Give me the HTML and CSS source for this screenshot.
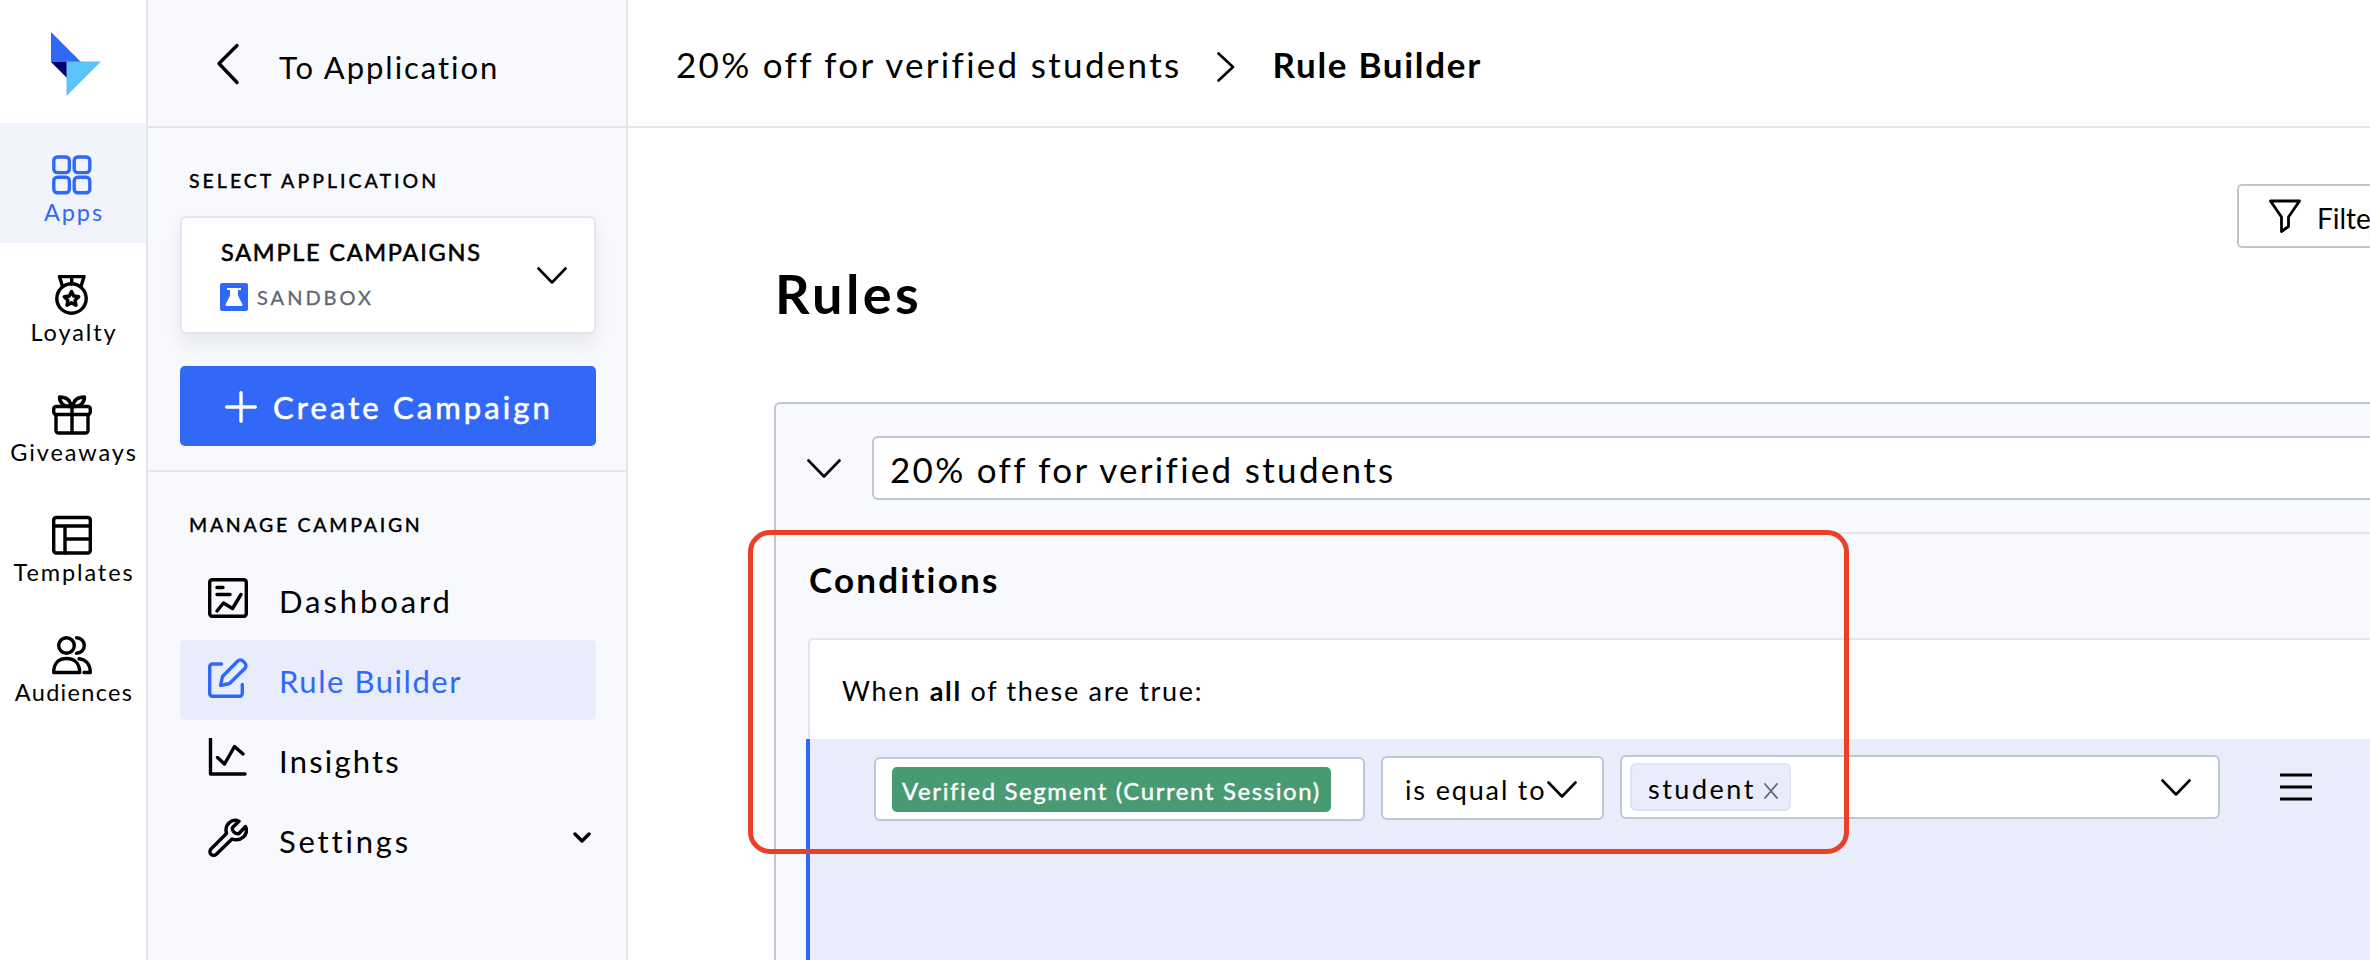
FILE: index.html
```html
<!DOCTYPE html>
<html lang="en">
<head>
<meta charset="utf-8">
<title>Rule Builder</title>
<link rel="stylesheet" href="styles.css">
</head>
<body>
<div class="app">
  <nav class="rail">
    <div class="logo">
      <svg width="50" height="64" viewBox="0 0 50 64"><path d="M0 0V30H30Z" fill="#2f69f8"/><path d="M0 30H16V46Z" fill="#02006c"/><path d="M15.5 29.5H50L15.5 64Z" fill="#5ac4fb"/></svg>
    </div>
    <a class="rail-item active">
      <svg class="rail-icon" viewBox="0 0 40 40"><rect x="1.8" y="2" width="15.6" height="15.6" rx="3.5"/><rect x="22.2" y="2" width="15.6" height="15.6" rx="3.5"/><rect x="1.8" y="22.2" width="15.6" height="15.6" rx="3.5"/><rect x="22.2" y="22.2" width="15.6" height="15.6" rx="3.5"/></svg>
      <span class="t-apps">Apps</span>
    </a>
    <a class="rail-item">
      <svg class="rail-icon" viewBox="0 0 40 40"><circle cx="19.5" cy="23.500" r="14.700"/><path d="M10.500 11.500L7.500 1.500H32L29 11.500M19.700 1.500V9M19.500 16.500l2.200 4.500 5 .7-3.600 3.500.9 5-4.500-2.400-4.500 2.400.9-5-3.600-3.500 5-.7z"/></svg>
      <span class="t-loyalty">Loyalty</span>
    </a>
    <a class="rail-item">
      <svg class="rail-icon" viewBox="0 0 40 40"><rect x="1.700" y="11.500" width="36.600" height="8" rx="2.500"/><path d="M4 19.500V35.500a2.500 2.500 0 0 0 2.500 2.500h27a2.500 2.500 0 0 0 2.500-2.500V19.500M20 11.500V38M19 11.500C12.500 12 7.500 8.500 7.500 2 14.500 2 18.500 5.500 19 11.500ZM21 11.500C27.500 12 32.500 8.500 32.500 2 25.500 2 21.500 5.500 21 11.500Z"/></svg>
      <span class="t-give">Giveaways</span>
    </a>
    <a class="rail-item">
      <svg class="rail-icon" viewBox="0 0 40 40"><rect x="1.700" y="2.500" width="36.600" height="35.500" rx="2.500"/><path d="M2 11H38M13 11V38M13 24H38"/></svg>
      <span class="t-templ">Templates</span>
    </a>
    <a class="rail-item">
      <svg class="rail-icon" viewBox="0 0 40 40"><circle cx="14.500" cy="10.500" r="7.800"/><path d="M1.700 37.500C1.700 28.500 6.500 23.500 14.500 23.500S27.700 28.500 27.700 37.500ZM24.500 2.700a7.800 7.800 0 0 1 0 15.600M27 23.800C34 24.500 38.300 29.500 38.300 37.500H32"/></svg>
      <span class="t-aud">Audiences</span>
    </a>
  </nav>

  <aside class="side">
    <header class="side-head">
      <svg class="back" width="24" height="42" viewBox="0 0 24 42"><path d="M21 2.500L3 20.500L21 39.500"/></svg>
      <span class="t-toapp">To Application</span>
    </header>
    <section class="side-top">
      <h3 class="label t-select">SELECT APPLICATION</h3>
      <div class="picker">
        <div>
          <div class="picker-name"><span class="t-sample">SAMPLE CAMPAIGNS</span></div>
          <div class="picker-env">
            <svg width="28" height="28" viewBox="0 0 28 28"><rect width="28" height="28" rx="2" fill="#2f69f8"/><path d="M7 5H21V7H18V12.500L22.500 21.500Q22.700 23 21 23H7Q5.300 23 5.500 21.500L10 12.500V7H7Z" fill="#fff"/></svg>
            <span class="t-sandbox">SANDBOX</span>
          </div>
        </div>
        <svg class="chev" width="30" height="18" viewBox="0 0 30 18"><path d="M1.500 1.500L15 15.500L28.500 1.500"/></svg>
      </div>
      <button class="create">
        <svg width="32" height="32" viewBox="0 0 32 32"><path d="M16 1.700V30.300M1.700 16H30.300"/></svg>
        <span class="t-create">Create Campaign</span>
      </button>
    </section>
    <section class="side-menu">
      <h3 class="label t-manage">MANAGE CAMPAIGN</h3>
      <a class="item">
        <svg class="item-icon" viewBox="0 0 40 40"><rect x="1.700" y="1.700" width="36.600" height="36.600" rx="2.500"/><path d="M9 9.500H15M9 16.500H22M9 33L15.500 25L24.500 30.500L33 16.500"/></svg>
        <span class="t-dash">Dashboard</span>
      </a>
      <a class="item current">
        <svg class="item-icon" viewBox="0 0 40 40"><path d="M13.500 6H4.500a2.800 2.800 0 0 0-2.800 2.800V35.500a2.800 2.800 0 0 0 2.800 2.800H31.500a2.800 2.800 0 0 0 2.800-2.800V26.500M12.500 27.500L14.500 18.500L29.500 3.200a4 4 0 0 1 5.600 0l1.700 1.700a4 4 0 0 1 0 5.600L21.500 25.500Z"/></svg>
        <span class="t-rule">Rule Builder</span>
      </a>
      <a class="item">
        <svg class="item-icon" viewBox="0 0 40 40"><path d="M2.500 1V36H37M9.500 19.500L16.500 26L26.500 8.500L35 16"/></svg>
        <span class="t-insights">Insights</span>
      </a>
      <a class="item">
        <svg class="item-icon" viewBox="0 0 40 40"><path d="M31 3.200C24 .2 16 6 18.500 15.500L3 31a3.800 3.800 0 0 0 0 5.300a3.800 3.800 0 0 0 5.300 0L24 21C33 24 41 17 37.500 8.500L31 15.500C27.500 16.500 23.500 13 24.500 9.500Z"/></svg>
        <span class="t-settings">Settings</span>
        <svg class="mini" width="18" height="12" viewBox="0 0 18 12"><path d="M2 2L9 9L16 2"/></svg>
      </a>
    </section>
  </aside>

  <main class="main">
    <header class="crumbs">
      <span class="t-crumb">20% off for verified students</span>
      <svg width="18" height="30" viewBox="0 0 18 30"><path d="M1.500 1.500L16 15L1.500 28.500"/></svg>
      <b class="t-here">Rule Builder</b>
    </header>
    <div class="content">
      <div class="tools">
        <h1 class="t-rules">Rules</h1>
        <button class="filter">
          <svg width="32" height="34" viewBox="0 0 32 34"><path d="M1.500 2H30.500L19.500 18V27.500L12.500 32.500V18Z"/></svg>
          <span class="t-filter">Filters</span>
        </button>
      </div>
      <div class="panel">
        <div class="panel-head">
          <svg class="chev" width="34" height="20" viewBox="0 0 34 20"><path d="M1.500 1.500L17 17.500L32.500 1.500"/></svg>
          <div class="name"><span class="t-crumb">20% off for verified students</span></div>
        </div>
        <div class="panel-body">
          <h2><span class="t-cond">Conditions</span></h2>
          <div class="group">
            <p class="when"><span class="t-when">When <b>all</b> of these are true:</span></p>
            <div class="cond">
              <div class="field f-attr"><span class="chip-green"><span class="t-seg">Verified Segment (Current Session)</span></span></div>
              <div class="field f-op"><span class="t-eq">is equal to</span>
                <svg class="chev" width="30" height="18" viewBox="0 0 30 18"><path d="M1.500 1.500L15 15.500L28.500 1.500"/></svg></div>
              <div class="field f-val">
                <span class="chip"><span class="t-student">student</span><svg width="14" height="16" viewBox="0 0 14 16"><path d="M1 1L13 15M13 1L1 15"/></svg></span>
                <svg class="chev" width="30" height="18" viewBox="0 0 30 18"><path d="M1.500 1.500L15 15.500L28.500 1.500"/></svg>
              </div>
              <svg class="burger" width="32" height="28" viewBox="0 0 32 28"><path d="M0 2H32M0 14H32M0 26H32"/></svg>
            </div>
          </div>
        </div>
      </div>
    </div>
  </main>
  <div class="marker"></div>
</div>
</body>
</html>
```
FILE: styles.css
```css
* { box-sizing: border-box; }
body { margin: 0; background: #fff; color: #000; font-family: Lato, "Open Sans", sans-serif; font-variant-ligatures: none; }
h1, h2, h3, p { margin: 0; font-weight: 400; }
span, b { white-space: pre; }
svg { display: block; flex: none; fill: none; stroke: currentColor; stroke-width: 3.4; stroke-linecap: round; stroke-linejoin: round; }
button { font: inherit; border: 0; margin: 0; padding: 0; color: inherit; text-align: left; }

/* Tracking */
.t-apps, .t-loyalty, .t-give, .t-templ { letter-spacing: 1.9px; }
.t-aud { letter-spacing: 1.3px; }
.t-toapp { letter-spacing: 1.95px; }
.t-select { letter-spacing: 3px; }
.t-sample { letter-spacing: 1.75px; }
.t-sandbox { letter-spacing: 3px; }
.t-create { letter-spacing: 3.1px; }
.t-manage { letter-spacing: 2.7px; }
.t-dash { letter-spacing: 2.9px; }
.t-rule { letter-spacing: 1.55px; }
.t-insights { letter-spacing: 2.2px; }
.t-settings { letter-spacing: 2.8px; }
.t-crumb { letter-spacing: 2.3px; }
.t-here { letter-spacing: 1.7px; }
.t-rules { letter-spacing: 3.4px; }
.t-cond { letter-spacing: 2.2px; }
.t-when { letter-spacing: 1.7px; }
.t-seg { letter-spacing: 1.6px; }
.t-eq { letter-spacing: 1.85px; }
.t-student { letter-spacing: 2.5px; }

.app { position: relative; display: flex; width: 2370px; height: 960px; overflow: hidden; }

.rail { width: 148px; border-right: 2px solid #e4e6ec; flex: none; }
.logo { height: 123px; padding: 32px 0 0 51px; }
.logo svg { stroke: none; }
.rail-item { display: flex; flex-direction: column; align-items: center; height: 120px; padding: 32px 2px 0 0; font-size: 23.500px; line-height: 30px; }
.rail-item span { margin-left: 4px; }
.rail-item.active { background: #f1f4fd; color: #2f69f8; }
.rail-icon { width: 40px; height: 40px; margin-bottom: 2px; }

.side { width: 480px; flex: none; background: #f8f9fd; border-right: 2px solid #e4e6ec; }
.side-head { display: flex; height: 128px; border-bottom: 2px solid #e4e6ec; font-size: 31px; line-height: 40px; padding: 43px 0 0 68px; }
.side-head span { padding: 4px 0 0 39px; }
.side-top { height: 344px; border-bottom: 2px solid #e4e6ec; padding: 41px 30px 0 32px; }
.label { font-size: 19.500px; line-height: 24px; font-weight: 500; padding-left: 9px; -webkit-text-stroke: .3px; white-space: nowrap; }
.picker { display: flex; justify-content: space-between; height: 118px; margin-top: 23px; padding: 21px 27px 0 38px; background: #fff; border: 2px solid #e4e6ec; border-radius: 6px; box-shadow: 0 10px 16px rgba(30, 40, 80, .08); }
.picker-name { font-size: 23.500px; line-height: 26px; padding-left: 1px; -webkit-text-stroke: .6px; }
.picker-env { display: flex; gap: 9px; margin-top: 18px; font-size: 20px; line-height: 29px; color: #5f6676; -webkit-text-stroke: .3px; }
.picker-env svg { stroke: none; }
.chev { stroke-width: 2.600; }
.picker .chev { margin-top: 28px; }
.create { display: flex; align-items: center; width: 416px; height: 80px; margin-top: 32px; padding-left: 45px; border-radius: 5px; background: #3268f7; color: #fff; font-size: 31px; line-height: 40px; }
.create svg { margin-top: 2px; }
.create span { padding: 1px 0 0 16px; -webkit-text-stroke: .6px; }
.side-menu { padding: 41px 30px 0 32px; }
.side-menu .label { margin-bottom: 23px; }
.item { display: flex; height: 80px; padding: 18px 5px 0 28px; border-radius: 5px; font-size: 31px; line-height: 40px; }
.item span { padding: 3px 0 0 31px; }
.item.current { background: #e8ecfb; color: #2f69f8; }
.item-icon { width: 40px; height: 40px; }
.mini { margin: 14px 0 0 auto; }

.main { flex: 1; min-width: 0; }
.crumbs { display: flex; height: 128px; border-bottom: 2px solid #e4e6ec; padding: 41px 0 0 48px; font-size: 35px; line-height: 46px; }
.crumbs svg { margin: 11px 37px 0 36px; stroke-width: 2.600; }
.crumbs b, .when b { font-weight: 700; }
.content { padding-left: 146px; }
.tools { display: flex; justify-content: space-between; height: 274px; }
.tools h1 { font-size: 54px; line-height: 66px; font-weight: 700; padding: 133px 0 0 1px; }
.filter { display: flex; width: 133px; height: 64px; margin-top: 56px; padding: 13px 0 0 30px; border: 2px solid #c2c6d0; border-right: 0; border-radius: 5px 0 0 5px; background: #fff; font-size: 28px; line-height: 36px; }
.filter svg { stroke-width: 2.800; }
.filter span { padding: 1px 0 0 16px; }
.panel { height: 560px; background: #f8f9fd; border: 2px solid #c2c6d0; border-width: 2px 0 0 2px; border-radius: 6px 0 0 0; }
.panel-head { display: flex; height: 130px; border-bottom: 2px solid #e4e6ec; padding: 32px 0 0 31px; }
.panel-head .chev { margin-top: 23px; }
.name { flex: 1; height: 64px; margin-left: 31px; padding: 8px 0 0 16px; border: 2px solid #c2c6d0; border-right: 0; border-radius: 6px 0 0 6px; background: #fff; font-size: 35px; line-height: 46px; }
.panel-body { padding: 22px 0 0 32px; }
.panel-body h2 { font-size: 35px; line-height: 46px; font-weight: 700; padding-left: 1px; }
.group { height: 330px; margin-top: 36px; border: 2px solid #e4e6ec; border-width: 2px 0 0 2px; border-radius: 5px 0 0 0; background: #fff; }
.when { height: 99px; padding: 33px 0 0 32px; font-size: 27px; line-height: 36px; }
.cond { display: flex; align-items: flex-start; height: 230px; margin-left: -4px; padding: 17px 0 0 64px; border-left: 4px solid #2f69f8; background: #e8ecfb; }
.field { display: flex; height: 64px; border: 2px solid #c2c6d0; border-radius: 6px; background: #fff; }
.f-attr { width: 491px; margin-top: 1px; padding: 8px 0 0 16px; }
.chip-green { display: block; width: 439px; height: 45px; padding: 8px 0 0 10px; border-radius: 5px; background: #479a71; color: #fff; font-size: 24px; line-height: 32px; -webkit-text-stroke: .4px; }
.f-op { width: 223px; margin-left: 16px; padding: 14px 0 0 22px; font-size: 27px; line-height: 36px; }
.f-op .chev { margin: 9px 0 0 0; }
.f-val { width: 600px; margin: -1px 0 0 16px; padding: 6px 27px 0 8px; justify-content: space-between; }
.f-val .chev { margin-top: 16px; }
.chip { display: flex; width: 161px; height: 48px; padding: 6px 0 0 16px; border: 2px solid #e1e4ec; border-radius: 6px; background: #e8ecfb; font-size: 27px; line-height: 36px; }
.chip svg { margin: 12px 0 0 8px; stroke-width: 1.800; color: #5f6676; }
.burger { margin: 17px 0 0 60px; stroke-width: 2.800; stroke-linecap: butt; }

/* Highlight drawn over the conditions area */
.marker { position: absolute; left: 748px; top: 530px; width: 1101px; height: 324px; border: 5px solid #ea4025; border-radius: 22px; }
```
